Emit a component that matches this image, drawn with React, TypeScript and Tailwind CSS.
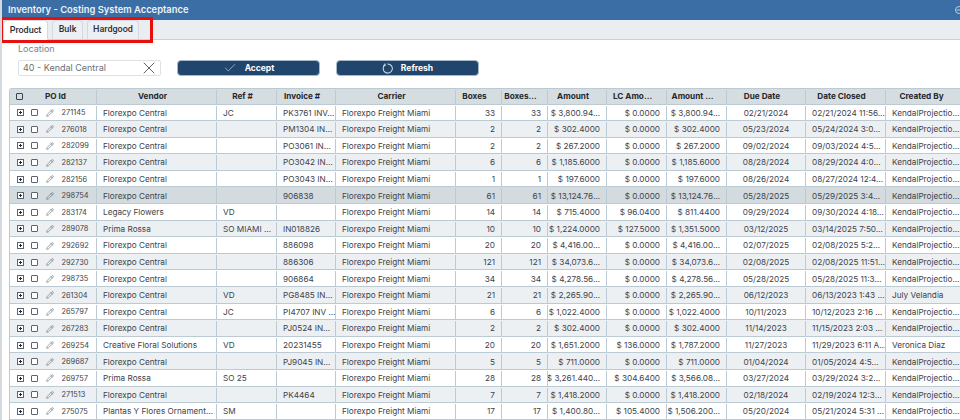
import { Check, Pencil, X } from "lucide-react";

const COLS =
  "grid grid-cols-[87px_120px_60px_59px_120px_46px_46px_59px_60px_60px_79px_80px_80px]";

const FC = "Florexpo Central";
const KP = "KendalProjectio…";
const Z = "$ 0.0000";

type Row = [string, string, string, string, string, string, string, string, string, string, string];

// id, vendor, ref, invoice, boxes, amount, lc, amount2, due, closed, created
const ROWS: Row[] = [
  ["271145", FC, "JC", "PK3761 INV…", "33", "$ 3,800.94…", Z, "$ 3,800.94…", "02/21/2024", "02/21/2024 11:56…", KP],
  ["276018", FC, "", "PM1304 IN…", "2", "$ 302.4000", Z, "$ 302.4000", "05/23/2024", "05/24/2024 3:0…", KP],
  ["282099", FC, "", "PO3061 IN…", "2", "$ 267.2000", Z, "$ 267.2000", "09/02/2024", "09/03/2024 4:5…", KP],
  ["282137", FC, "", "PO3042 IN…", "6", "$ 1,185.6000", Z, "$ 1,185.6000", "08/28/2024", "08/29/2024 4:0…", KP],
  ["282156", FC, "", "PO3043 IN…", "1", "$ 197.6000", Z, "$ 197.6000", "08/26/2024", "08/27/2024 12:4…", KP],
  ["298754", FC, "", "906838", "61", "$ 13,124.76…", Z, "$ 13,124.76…", "05/28/2025", "05/29/2025 3:4…", KP],
  ["283174", "Legacy Flowers", "VD", "", "14", "$ 715.4000", "$ 96.0400", "$ 811.4400", "09/29/2024", "09/30/2024 4:18…", KP],
  ["289078", "Prima Rossa", "SO MIAMI …", "IN018826", "10", "$ 1,224.0000", "$ 127.5000", "$ 1,351.5000", "03/12/2025", "03/14/2025 7:50…", KP],
  ["292692", FC, "", "886098", "20", "$ 4,416.00…", Z, "$ 4,416.00…", "02/07/2025", "02/08/2025 5:2…", KP],
  ["292730", FC, "", "886306", "121", "$ 34,073.6…", Z, "$ 34,073.6…", "02/08/2025", "02/08/2025 11:51…", KP],
  ["298735", FC, "", "906864", "34", "$ 4,278.56…", Z, "$ 4,278.56…", "05/28/2025", "05/28/2025 11:3…", KP],
  ["261304", FC, "VD", "PG8485 IN…", "21", "$ 2,265.90…", Z, "$ 2,265.90…", "06/12/2023", "06/13/2023 1:43 …", "July Velandia"],
  ["265797", FC, "JC", "PI4707 INV …", "6", "$ 1,022.4000", Z, "$ 1,022.4000", "10/11/2023", "10/12/2023 2:16 …", KP],
  ["267283", FC, "", "PJ0524 IN…", "2", "$ 302.4000", Z, "$ 302.4000", "11/14/2023", "11/15/2023 2:03 …", KP],
  ["269254", "Creative Floral Solutions", "VD", "20231455", "20", "$ 1,651.2000", "$ 136.0000", "$ 1,787.2000", "11/27/2023", "11/29/2023 6:11 A…", "Veronica Diaz"],
  ["269687", FC, "", "PJ9045 IN…", "5", "$ 711.0000", Z, "$ 711.0000", "01/04/2024", "01/05/2024 4:5…", KP],
  ["269757", "Prima Rossa", "SO 25", "", "28", "$ 3,261.440…", "$ 304.6400", "$ 3,566.08…", "03/27/2024", "03/29/2024 3:2…", KP],
  ["271513", FC, "", "PK4464", "7", "$ 1,418.2000", Z, "$ 1,418.2000", "02/18/2024", "02/19/2024 12:3…", KP],
  ["275075", "Plantas Y Flores Ornament…", "SM", "", "17", "$ 1,400.80…", "$ 105.4000", "$ 1,506.200…", "05/20/2024", "05/21/2024 5:31 …", KP],
];

const HEADERS = ["Vendor", "Ref #", "Invoice #", "Carrier", "Boxes", "Boxes…", "Amount", "LC Amo…", "Amount …", "Due Date", "Date Closed", "Created By"];

function Checkbox() {
  return <span className="block h-[7px] w-[7px] shrink-0 rounded-[1px] border border-[#5b6470] bg-white" />;
}

function ExpandBox() {
  return (
    <span className="relative block h-[7px] w-[7px] shrink-0 border border-[#5b6470] bg-white">
      <span className="absolute left-[1px] top-[2px] h-[1px] w-[3px] bg-[#1f2937]" />
      <span className="absolute left-[2px] top-[1px] h-[3px] w-[1px] bg-[#1f2937]" />
    </span>
  );
}

function Cell({ children, align = "left" }: { children?: React.ReactNode; align?: "left" | "right" | "center" }) {
  const alignClass = align === "right" ? "justify-end pr-[6px]" : align === "center" ? "justify-center" : "pl-[6px]";
  return (
    <div className={`flex items-center overflow-hidden whitespace-nowrap border-r border-[#bccad3] ${alignClass}`}>
      {children}
    </div>
  );
}

function TableRow({ row, index }: { row: Row; index: number }) {
  const [id, vendor, ref, invoice, boxes, amount, lc, amount2, due, closed, created] = row;
  const bg = id === "298754" ? "bg-[#d4dbdf]" : index % 2 === 0 ? "bg-white" : "bg-[#edf0f3]";
  return (
    <div className={`${COLS} h-[16.6px] border-b border-[#bccad3] pt-[1px] ${bg}`}>
      <div className="flex items-center overflow-hidden border-r border-[#bccad3] pl-[7px]">
        <ExpandBox />
        <span className="ml-[7px]"><Checkbox /></span>
        <Pencil className="ml-[7.5px] h-[8px] w-[8px] shrink-0 text-[#5b6470]" strokeWidth={1.75} />
        <span className="ml-[8px] shrink-0 text-[7.4px]">{id}</span>
      </div>
      <Cell>{vendor}</Cell>
      <Cell>{ref}</Cell>
      <Cell>{invoice}</Cell>
      <Cell>Florexpo Freight Miami</Cell>
      <Cell align="right">{boxes}</Cell>
      <Cell align="right">{boxes}</Cell>
      <Cell align="right">{amount}</Cell>
      <Cell align="right">{lc}</Cell>
      <Cell align="right">{amount2}</Cell>
      <Cell align="center">{due}</Cell>
      <Cell>{closed}</Cell>
      <Cell>{created}</Cell>
    </div>
  );
}

export default function App() {
  return (
    <div className="relative flex h-[420px] w-[960px] flex-col overflow-hidden border-l-2 border-[#d5dade] bg-white font-['Inter','Noto_Sans',sans-serif] text-[8.2px] text-[#3c434c]">
      <header className="flex h-[19.5px] shrink-0 items-center justify-between bg-[#3a6ea5] pl-[6px] text-[9.4px] font-semibold text-[#eef3f8]">
        <span>Inventory - Costing System Acceptance</span>
        <svg viewBox="0 0 8 8" className="-mr-[3px] h-[8px] w-[8px] text-[#b9cde2]" fill="none" stroke="currentColor">
          <circle cx="4" cy="4" r="3.5" />
          <path d="M1.5 4H8" />
        </svg>
      </header>

      <nav className="flex h-[20.5px] shrink-0 items-end gap-[4px] border-b border-[#c9d2d9] bg-[#ebeef1] pl-[1px] font-['Roboto',sans-serif] text-[9px] font-medium text-[#2b2f33]">
        <button className="-mb-[1px] flex h-[20px] w-[45px] items-center justify-center rounded-t-[4px] border border-b-0 border-[#d3d9de] bg-white">Product</button>
        <button className="flex h-[19px] w-[31px] items-center justify-center rounded-t-[4px] border border-b-0 border-[#d3d9de] bg-[#edf0f3]">Bulk</button>
        <button className="flex h-[19px] w-[52px] items-center justify-center rounded-t-[4px] border border-b-0 border-[#d3d9de] bg-[#edf0f3]">Hardgood</button>
      </nav>

      <section className="flex h-[47.5px] shrink-0 items-end gap-[16px] pb-[11.5px] pl-[16px]">
        <div className="flex w-[143px] flex-col">
          <label className="mb-[6px] text-[9px] leading-[10px] text-[#7b8289]">Location</label>
          <div className="flex h-[16px] items-center justify-between rounded-[2px] border border-[#dde2e6] pl-[4px] pr-[1px] text-[9px] text-[#6b7177]">
            <span>40 - Kendal Central</span>
            <X className="h-[20px] w-[20px] text-[#3c434c]" strokeWidth={1} />
          </div>
        </div>
        <button className="flex h-[16px] w-[143px] items-center justify-center rounded-[4px] border border-[#a9b8c6] bg-[#21466d] text-[8.5px] font-bold text-white">
          <Check className="mr-[8px] h-[14px] w-[14px] text-[#b8c6d4]" strokeWidth={1.25} />
          Accept
        </button>
        <button className="flex h-[16px] w-[143px] items-center justify-center rounded-[4px] border border-[#a9b8c6] bg-[#21466d] text-[8.5px] font-bold text-white">
          <svg viewBox="0 0 12 12" className="mr-[8px] h-[11px] w-[11px] text-[#d5dde5]" fill="none" stroke="currentColor" strokeWidth="1.1">
            <path d="M3.4 1.9A5 5 0 1 0 6 1" />
            <path d="M3.4 0.6V2.4H1.6" />
          </svg>
          Refresh
        </button>
      </section>

      <div className="ml-[7px] w-[956px] shrink-0 overflow-hidden rounded-t-[3px] border-l border-t border-[#bccad3]">
        <div className={`${COLS} h-[16px] border-b border-[#bccad3] bg-[#d6dde1] pt-[1px] font-bold text-[#23282d]`}>
          <div className="flex items-center border-r border-[#bccad3] pl-[6px]">
            <span className="block h-[7px] w-[7px] rounded-[1px] border border-[#374151]" />
            <span className="ml-[22px]">PO Id</span>
          </div>
          {HEADERS.map((h) => (
            <div key={h} className="flex items-center justify-center overflow-hidden whitespace-nowrap border-r border-[#bccad3] pr-[8px]">{h}</div>
          ))}
        </div>
        {ROWS.map((row, i) => (
          <TableRow key={row[0]} row={row} index={i} />
        ))}
      </div>

      {/* annotation drawn on the screenshot */}
      <div className="absolute -left-[2px] top-[17px] h-[26px] w-[153px] border-[3px] border-[#e8100f]" />
    </div>
  );
}
